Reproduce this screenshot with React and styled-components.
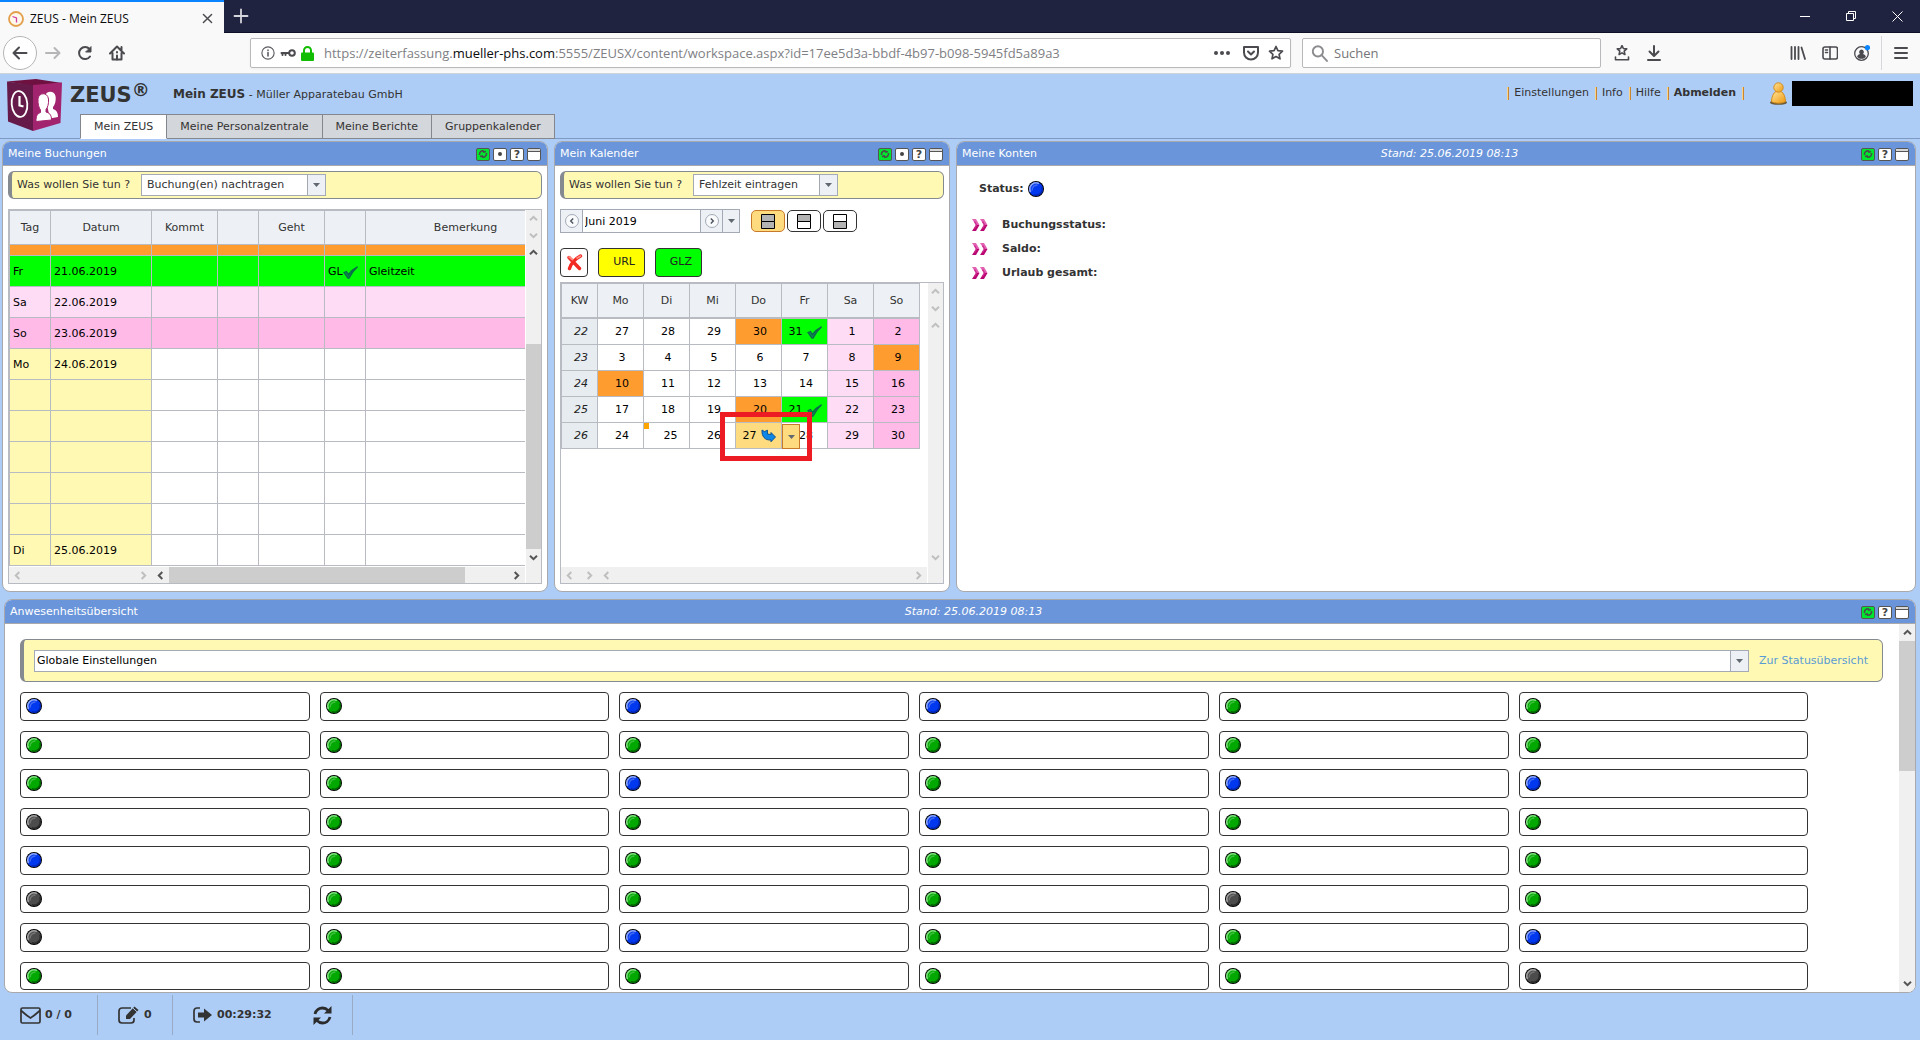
import React from "react";
import styled, { createGlobalStyle, css } from "styled-components";

const ui = `"DejaVu Sans", Verdana, sans-serif`;
const chrome = `"Open Sans", "Segoe UI", sans-serif`;
const c = {
  page: "#adcdf7",
  head: "#6a95da",
  line: "#b8bcc2",
  frame: "#a9a9ab",
  yellow: "#fff9b4",
  field: "#a3aab5",
  text: "#333",
  cell: "#edf1f5",
  orange: "#ff9c30",
  green: "#00ff00",
  sat: "#ffdcf5",
  sun: "#ffbae8",
};

const Global = createGlobalStyle`
  *, *::before, *::after { box-sizing: border-box; }
  html, body, #root { height: 100%; }
  body { margin: 0; background: ${c.page}; color: ${c.text}; font: 11px/14px ${ui}; overflow: hidden; }
  button, input, select { font: inherit; color: inherit; margin: 0; padding: 0; border-radius: 0; }
  a { color: inherit; text-decoration: none; }
  h1, h2, p, ul { margin: 0; padding: 0; font: inherit; list-style: none; }
  svg { display: block; flex: none; }
`;

const Page = styled.div`
  height: 100%;
  display: flex;
  flex-direction: column;
`;

/* ---------- browser frame ---------- */

const TitleBar = styled.div`
  display: flex;
  height: 33px;
  background: #20233f;
  border-bottom: 1px solid #0f1025;
  color: #fff;
  font: 12px/16px ${chrome};
`;
const BrowserTab = styled.div`
  display: flex;
  align-items: center;
  gap: 6px;
  width: 224px;
  height: 33px;
  padding: 2px 10px 0 8px;
  border-top: 2px solid #0a84ff;
  background: #f9f9fa;
  color: #0c0c0d;
  > span { flex: 1; white-space: nowrap; }
`;
const PlainButton = styled.button`
  display: flex;
  align-items: center;
  justify-content: center;
  width: ${(p) => p.$w || 32}px;
  height: ${(p) => p.$h || 32}px;
  border: 0;
  background: none;
  flex: none;
`;
const Spring = styled.div`
  flex: 1;
`;
const NavBar = styled.div`
  display: flex;
  align-items: center;
  height: 41px;
  background: #f9f9fa;
  border-bottom: 1px solid #cfd3da;
  color: #4a4a4f;
  font: 13px/18px ${chrome};
`;
const NavButtons = styled.div`
  display: flex;
  align-items: center;
  width: 250px;
  padding-left: 3px;
`;
const BackButton = styled(PlainButton)`
  border: 1px solid #b5b5b8;
  border-radius: 50%;
  background: #fff;
`;
const UrlBox = styled.div`
  display: flex;
  align-items: center;
  flex: 1;
  height: 30px;
  padding: 0 5px 0 10px;
  gap: 5px;
  border: 1px solid #b9b9bc;
  border-radius: 2px;
  background: #fff;
  box-shadow: 0 1px 3px rgba(0, 0, 0, 0.05);
`;
const UrlText = styled.p`
  flex: 1;
  padding-left: 5px;
  color: #808084;
  white-space: nowrap;
  overflow: hidden;
  b { color: #0c0c0d; font-weight: 400; }
`;
const SearchBox = styled.label`
  display: flex;
  align-items: center;
  width: 299px;
  height: 30px;
  margin-left: 11px;
  padding-left: 8px;
  gap: 6px;
  border: 1px solid #b9b9bc;
  border-radius: 2px;
  background: #fff;
  input { border: 0; width: 100%; outline: 0; background: none; }
  input::placeholder { color: #757578; opacity: 1; }
`;
const NavTools = styled.div`
  display: flex;
  align-items: center;
  width: 319px;
  padding: 0 3px 0 5px;
`;
const Rule = styled.i`
  width: 1px;
  height: 34px;
  background: #d7d7db;
  margin: 0 3px;
`;

/* ---------- application header ---------- */

const AppHead = styled.header`
  display: flex;
  height: 65px;
  border-bottom: 1px solid #8098c4;
`;
const LogoSlot = styled.div`
  width: 70px;
  padding: 5px 0 0 7px;
`;
const HeadMain = styled.div`
  display: flex;
  flex-direction: column;
  justify-content: space-between;
  flex: 1;
`;
const TitleRow = styled.div`
  display: flex;
  align-items: center;
  height: 40px;
  b { font-size: 12px; }
`;
const Brand = styled.h1`
  display: flex;
  width: 103px;
  font-size: 21px;
  line-height: 28px;
  font-weight: 700;
  padding-top: 2px;
  sup { font-size: 18px; line-height: 18px; }
`;
const Tabs = styled.nav`
  display: flex;
  margin: 0 0 -1px 10px;
`;
const Tab = styled.a`
  height: 25px;
  padding: 5px 13px 0;
  border: 1px solid #83878d;
  border-left-width: ${(p) => (p.$active ? 1 : 0)}px;
  background: ${(p) => (p.$active ? "#fff" : "#d3d6da")};
  border-bottom-color: ${(p) => (p.$active ? "#fff" : "#83878d")};
`;
const Menu = styled.nav`
  display: flex;
  align-items: center;
  height: 36px;
  padding-right: 7px;
  margin-top: 1px;
  a { padding: 0 6px 1px 5px; }
`;
const MenuSep = styled.i`
  width: 2px;
  height: 13px;
  border-left: 1px solid #f7d38a;
  border-right: 1px solid #c98532;
`;
const UserBar = styled.div`
  display: flex;
  align-items: center;
  gap: 5px;
  margin-left: 26px;
`;
const Redacted = styled.div`
  width: 121px;
  height: 25px;
  background: #000;
`;

/* ---------- panels ---------- */

const Main = styled.main`
  flex: 1;
  min-height: 0;
  display: flex;
  flex-direction: column;
  gap: 7px;
  padding: 2px 4px 0 2px;
`;
const TopRow = styled.div`
  display: grid;
  grid-template-columns: 546px 396px minmax(0, 1fr);
  gap: 6px;
`;
const PanelBox = styled.section`
  display: flex;
  flex-direction: column;
  min-width: 0;
  min-height: 0;
  border: 1px solid ${c.frame};
  border-radius: 8px;
  background: #fff;
  overflow: hidden;
  flex: ${(p) => (p.$grow ? 1 : "none")};
  margin-left: ${(p) => (p.$grow ? 2 : 0)}px;
`;
const PanelHead = styled.header`
  display: grid;
  grid-template-columns: 1fr auto 1fr;
  align-items: center;
  height: 24px;
  padding: 1px 6px 0 5px;
  border-bottom: 1px solid ${c.frame};
  background: ${c.head};
  color: #fff;
  em { padding-left: 28px; }
`;
const PanelTools = styled.div`
  grid-column: 3;
  display: flex;
  justify-content: flex-end;
  gap: 3px;
`;
const ToolButton = styled.button`
  display: flex;
  align-items: center;
  justify-content: center;
  width: 14px;
  height: 13px;
  border: 1px solid #555;
  border-radius: 2px;
  background: ${(p) => (p.$on ? "#00e62e" : "#fff")};
  color: #444;
  font-weight: 700;
  line-height: 11px;
`;
const Pad = styled.div`
  flex: 1;
  display: flex;
  flex-direction: column;
  padding: 5px 5px 7px;
`;
const YellowBar = styled.div`
  display: flex;
  align-items: center;
  height: ${(p) => (p.$tall ? 43 : 28)}px;
  padding: ${(p) => (p.$tall ? "0 10px" : "0 5px")};
  gap: ${(p) => (p.$tall ? 10 : 7)}px;
  border: 1px solid #858a90;
  border-left-width: 4px;
  border-radius: 6px;
  background: ${c.yellow};
  label { min-width: 117px; }
  a { min-width: 113px; color: #5a9bd5; }
`;
const Combo = styled.div`
  display: grid;
  grid-template-columns: 1fr 18px;
  width: ${(p) => p.$w || "auto"};
  flex: ${(p) => (p.$w ? "none" : 1)};
  height: 22px;
  border: 1px solid ${c.field};
  background: #fff;
  select {
    grid-area: 1 / 1 / 2 / 3;
    appearance: none;
    border: 0;
    background: none;
    padding-left: ${(p) => (p.$w ? 5 : 2)}px;
    color: ${(p) => (p.$w ? c.text : "#000")};
    outline: 0;
  }
`;
const Drop = styled.span`
  grid-area: 1 / 2;
  display: flex;
  align-items: center;
  justify-content: center;
  border-left: 1px solid ${c.field};
  background: ${c.cell};
  pointer-events: none;
`;

/* ---------- scroll frame ---------- */

const Frame = styled.div`
  flex: 1;
  display: grid;
  grid-template-columns: minmax(0, 1fr) 16px;
  grid-template-rows: 1fr 17px;
  border: 1px solid ${c.line};
  margin-top: ${(p) => p.$gap}px;
`;
const View = styled.div`
  overflow: hidden;
  background: #fff;
`;
const VScroll = styled.div`
  display: flex;
  flex-direction: column;
  background: #f0f0f0;
  border-left: 1px solid #fff;
`;
const HScroll = styled.div`
  display: flex;
  border-top: 1px solid #fff;
  background: #f0f0f0;
`;
const Corner = styled.div`
  background: #f0f0f0;
  border-left: 1px solid #fff;
`;
const Bit = styled.div`
  display: flex;
  width: ${(p) => p.$w || "auto"};
  flex: ${(p) => (p.$w ? "none" : 1)};
  justify-content: space-between;
`;
const ArrowSlot = styled.span`
  display: flex;
  align-items: center;
  justify-content: center;
  flex: 0 0 17px;
`;
const Gap = styled.span`
  flex: ${(p) => p.$n} 0 0;
  background: ${(p) => (p.$thumb ? "#cdcdcd" : "none")};
`;

const rot = { up: 0, right: 90, down: 180, left: 270 };
const Arrow = ({ dir, dim }) => (
  <ArrowSlot>
    <svg width="9" height="9" viewBox="0 0 9 9">
      <path d="M1 6.3 4.5 2.8 8 6.3" fill="none" stroke={dim ? "#bfbfbf" : "#555"} strokeWidth="2" transform={`rotate(${rot[dir]} 4.5 4.5)`} />
    </svg>
  </ArrowSlot>
);

/* ---------- bookings ---------- */

const grid = css`
  table-layout: fixed;
  border-collapse: separate;
  border-spacing: 0;
  border: 0 solid ${c.line};
  border-width: 1px 0 0 1px;
  th, td {
    padding: 1px 0 0;
    border: 0 solid ${c.line};
    border-width: 0 1px 1px 0;
    font-weight: 400;
    line-height: 14px;
    white-space: nowrap;
  }
`;
const BookTable = styled.table`
  ${grid}
  width: 557px;
  th { height: 34px; background: ${c.cell}; }
  td { color: #000; padding: 2px 0 0 3px; }
`;
const BookRow = styled.tr`
  height: ${(p) => (p.$cut ? 11 : 31)}px;
  background: ${(p) => p.$bg || "#fff"};
  td:nth-child(-n + 2) { background: ${(p) => p.$bg || c.yellow}; }
`;
const WithIcon = styled.span`
  display: flex;
  align-items: center;
  justify-content: ${(p) => (p.$center ? "center" : "flex-start")};
  gap: ${(p) => (p.$center ? 4 : 0)}px;
`;

/* ---------- calendar ---------- */

const Controls = styled.div`
  display: flex;
  gap: ${(p) => p.$gap}px;
  margin-top: ${(p) => p.$top}px;
`;
const Spinner = styled.div`
  display: grid;
  grid-template-columns: 22px 1fr 22px 17px;
  width: 180px;
  height: 24px;
  margin-right: 9px;
  border: 1px solid ${c.field};
  input { border: 0; min-width: 0; padding: 2px 0 0 2px; color: #000; outline: 0; background: #fff; }
`;
const SpinButton = styled.button`
  display: flex;
  align-items: center;
  justify-content: center;
  border: 0 solid ${c.field};
  border-width: ${(p) => (p.$first ? "0 1px 0 0" : "0 0 0 1px")};
  background: ${c.cell};
`;
const Toggle = styled.button`
  display: flex;
  align-items: center;
  justify-content: center;
  width: 34px;
  height: 22px;
  margin-top: 1px;
  border: 1px solid ${(p) => (p.$on ? "#c9792a" : "#333")};
  border-radius: 5px;
  background: ${(p) => (p.$on ? "#ffdb7f" : "#fff")};
`;
const TypeButton = styled.button`
  display: flex;
  align-items: center;
  justify-content: ${(p) => (p.$bg ? "flex-end" : "center")};
  width: ${(p) => (p.$bg ? 47 : 28)}px;
  height: 29px;
  padding: ${(p) => (p.$bg ? "0 9px 2px 0" : 0)};
  border: 1px solid #333;
  border-radius: 4px;
  background: ${(p) => p.$bg || "#fff"};
  color: #222;
`;
const CalTable = styled.table`
  ${grid}
  width: 359px;
  thead th { height: 35px; border-bottom-width: 2px; background: ${c.cell}; }
  th:first-child { width: 36px; }
  tbody tr { height: 26px; }
  tbody th { background: #e6ecf0; color: #222; font-style: italic; padding-left: 3px; }
`;
const Day = styled.td`
  position: relative;
  color: #000;
  text-align: center;
  background: ${(p) => p.$bg || "#fff"};
  && { padding-left: ${(p) => (p.$icon ? 1 : p.$mark ? 8 : 3)}px; }
`;
const Marker = styled.i`
  position: absolute;
  left: 0;
  top: 0;
  width: 5px;
  height: 6px;
  background: #ffa500;
`;
const CellDrop = styled.button`
  position: absolute;
  z-index: 2;
  left: 46px;
  top: 1px;
  display: flex;
  align-items: center;
  justify-content: center;
  width: 18px;
  height: 25px;
  border: 1px solid #c9792a;
  background: #ffdb7f;
`;
const Highlight = styled.div`
  position: absolute;
  z-index: 3;
  left: -16px;
  top: -11px;
  width: 92px;
  height: 49px;
  border: 5px solid #ed1c24;
  pointer-events: none;
`;

/* ---------- accounts ---------- */

const Accounts = styled.div`
  padding: 15px;
  font-weight: 700;
`;
const StatusLine = styled.p`
  display: flex;
  align-items: center;
  gap: 4px;
  height: 16px;
  padding-left: 7px;
  margin-bottom: 16px;
`;
const AccountItem = styled.li`
  display: flex;
  align-items: center;
  gap: 14px;
  height: 24px;
`;

/* ---------- presence ---------- */

const PresenceBody = styled.div`
  flex: 1;
  min-height: 0;
  display: flex;
`;
const PresenceMain = styled.div`
  flex: 1;
  min-width: 0;
  display: flex;
  flex-direction: column;
  gap: 10px;
  padding: 15px 16px 2px 15px;
`;
const Cards = styled.ul`
  flex: 1;
  display: grid;
  grid-template-columns: repeat(6, 1fr);
  grid-auto-rows: 1fr;
  gap: 10px;
  width: 96%;
`;
const Card = styled.li`
  padding: 5px;
  border: 1px solid #333;
  border-radius: 4px;
`;
const SideScroll = styled(VScroll)`
  width: 16px;
  border-left: 0;
`;

/* ---------- footer ---------- */

const Foot = styled.footer`
  display: flex;
  padding: 2px 0 5px;
  height: 47px;
  font-weight: 700;
`;
const FootPart = styled.div`
  display: flex;
  align-items: center;
  gap: 4px;
  min-width: ${(p) => p.$w}px;
  padding: 0 20px;
  border-right: 1px solid #98aac4;
  button { margin: 0 0 0 auto; }
`;

/* ---------- icons ---------- */

const Down = () => (
  <svg width="7" height="4" viewBox="0 0 7 4"><path d="M0 0h7L3.5 4z" fill="#616870" /></svg>
);
const Line = ({ s = 16, w = 2, color = "#4a4a4f", children }) => (
  <svg width={s} height={s} viewBox="0 0 16 16" fill="none" stroke={color} strokeWidth={w} strokeLinecap="round" strokeLinejoin="round">{children}</svg>
);
const star = "M8 1.5l1.9 4.2 4.6.5-3.4 3.1.9 4.5L8 11.500 4 13.800l.9-4.500L1.500 6.200l4.600-.5z";
const Favicon = () => (
  <svg width="16" height="16" viewBox="0 0 16 16">
    <circle cx="8" cy="8" r="7" fill="#fff8ec" stroke="#e2a04d" strokeWidth="1.800" />
    <path d="M4.500 5.500 8.500 7v4.500" fill="none" stroke="#cf3fa2" strokeWidth="1.300" />
  </svg>
);
const Logo = () => (
  <svg width="55" height="52" viewBox="0 0 55 52">
    <path d="M0 2.500 29 0l26 4-29 3z" fill="#6e1140" />
    <path d="M0 2.500 26 6v46L1 42.500z" fill="#651a49" />
    <path d="M26 6 55 3.500 53.500 44 26 52z" fill="#a3246e" />
    <ellipse cx="12.500" cy="25" rx="7.800" ry="13" fill="none" stroke="#fff" strokeWidth="1.800" transform="rotate(-5 12.500 25)" />
    <path d="M12.500 17v9.500l4 1" fill="none" stroke="#fff" strokeWidth="2.200" />
    <path d="M38 17c1-5 9-6 10.500 0 .8 5-.8 9-2.500 11v2c2 1 5 1.500 5 8l-8 1.500z" fill="#fff" />
    <path d="M31 20c.5-6.500 9.500-7.500 10.500 0 .5 5-1 8.500-2.500 10.500v2.500c3 1 5.500 2 5.500 8L29 42.500c0-5.500 1-7.500 4.500-9v-2.500c-1.500-2-2.800-6-2.500-11z" fill="#fff" stroke="#a3246e" />
  </svg>
);
const User = () => (
  <svg width="17" height="23" viewBox="0 0 17 23">
    <defs>
      <linearGradient id="user" x2="1" y2="1"><stop stopColor="#ffe49a" /><stop offset="1" stopColor="#ee9a12" /></linearGradient>
    </defs>
    <ellipse cx="8.500" cy="20.500" rx="8.500" ry="2.300" fill="#6b5838" />
    <path d="M6 9.500C3 11 1.700 15 1.500 19.500c3 2.200 11 2.200 14 0C15.300 15 14 11 11 9.500z" fill="url(#user)" stroke="#d48d1c" />
    <circle cx="8.500" cy="5.500" r="4.700" fill="url(#user)" stroke="#d48d1c" />
  </svg>
);
const Check = () => (
  <svg width="15" height="13" viewBox="0 0 15 13"><path d="M1 6.500 3.500 5.500 5.500 8.500C8 5 11 2.500 14.500.8 11 4 8 8 6 12.200H5z" fill="#0d8a50" stroke="#0a6a4a" strokeWidth="1.300" /></svg>
);
const BlueArrow = () => (
  <svg width="15" height="14" viewBox="0 0 15 14"><path d="M1 1 3.500 2.500 6.500 1.200V5L10 5.500V3.500L14.500 8 10 12.800V11C4 11.500.5 7.500 1 1z" fill="#0d86e6" stroke="#074a8c" strokeWidth=".9" /></svg>
);
const RedX = () => (
  <svg width="17" height="17" viewBox="0 0 17 17">
    <path d="M3 3.500 13.500 14.500M14.500 2C9 5 5 9.500 3.500 14.500" stroke="#f32a22" strokeWidth="3.400" fill="none" strokeLinecap="round" />
    <path d="M2.500 2.500 7 6M15 1.700 10.500 4.500" stroke="#ff8c80" strokeWidth="1.600" fill="none" />
  </svg>
);
const Chevrons = () => (
  <svg width="16" height="12" viewBox="0 0 16 12">
    {[0, 8].map((x) => (
      <g key={x} transform={`translate(${x} 0)`}>
        <path d="M0 0h4l3.500 6H4z" fill="#e263b4" />
        <path d="M0 12h4l3.500-6H4z" fill="#b9056f" />
        <path d="M2.500 2.500 4.500 6l-2 3.500" stroke="#cf2b8f" fill="none" strokeWidth="1.500" />
      </g>
    ))}
  </svg>
);
const balls = {
  B: ["#0038f0", "#8da6f5", "#0025b0"],
  G: ["#00a800", "#7fdc7f", "#006200"],
  K: ["#4c4c4c", "#a0a0a0", "#2a2a2a"],
};
const Ball = ({ kind }) => {
  const [base, light, dark] = balls[kind];
  return (
    <svg width="16" height="16" viewBox="0 0 16 16" fill="none">
      <circle cx="8" cy="8" r="8" fill="#000" />
      <circle cx="8" cy="8" r="7" fill={base} />
      <path d="M2.600 11A6.200 6.200 0 0 1 11 2.600" stroke={light} strokeWidth="1.600" />
      <path d="M4.200 9.500A4.600 4.600 0 0 1 9.500 4.200" stroke={light} strokeWidth="1.600" opacity=".45" />
      <path d="M13.800 5.800A6.200 6.200 0 0 1 5.800 13.800" stroke={dark} strokeWidth="1.500" />
    </svg>
  );
};
const Half = ({ top, bottom }) => (
  <svg width="14" height="15" viewBox="0 0 14 15" stroke="#000">
    <path d="M.5.500h13v7H.5z" fill={top ? "#b3b3b3" : "#fff"} />
    <path d="M.5 7.500h13v7H.5z" fill={bottom ? "#b3b3b3" : "#fff"} />
  </svg>
);
const Round = ({ left }) => (
  <svg width="14" height="14" viewBox="0 0 14 14" fill="none">
    <circle cx="7" cy="7" r="6.500" fill="#f8fafc" stroke="#a3aab5" />
    <path d={left ? "M8.200 4.500 5.700 7l2.500 2.500" : "M5.800 4.500 8.300 7l-2.500 2.500"} stroke="#4c535c" strokeWidth="1.400" />
  </svg>
);
const Cycle = () => (
  <svg width="19" height="19" viewBox="0 0 19 19" fill="none" stroke="#2b2b2b" strokeWidth="2.800">
    <path d="M2 8C3 4 6.500 2 9.500 2c2.500 0 4.300 1 5.800 2.600M17 11c-1 4-4.500 6-7.500 6-2.500 0-4.300-1-5.800-2.600" />
    <path d="M18.500 0v7.500H11zM.5 19v-7.500H8z" fill="#2b2b2b" stroke="none" />
  </svg>
);

const Tools = ({ dot }) => (
  <PanelTools>
    <ToolButton $on aria-label="Aktualisieren">
      <svg width="10" height="10" viewBox="0 0 10 10" fill="none" stroke="#4a4a4a" strokeWidth="1.500">
        <path d="M1.500 6C1 3 3.500 1.300 6 2M8.500 4C9 7 6.500 8.700 4 8M2 7.500l3-.8M8 2.500l-3 .8" />
      </svg>
    </ToolButton>
    {dot && (
      <ToolButton aria-label="Optionen">
        <svg width="4" height="4" viewBox="0 0 4 4"><circle cx="2" cy="2" r="2" fill="#444" /></svg>
      </ToolButton>
    )}
    <ToolButton aria-label="Hilfe">?</ToolButton>
    <ToolButton aria-label="Maximieren">
      <svg width="12" height="11" viewBox="0 0 12 11"><path d="M0 0h12v2H0z" fill="#d8d8d8" /><path d="M0 2h12v1H0z" fill="#555" /></svg>
    </ToolButton>
  </PanelTools>
);
const Panel = ({ title, stand, dot, grow, children }) => (
  <PanelBox $grow={grow}>
    <PanelHead>
      <h2>{title}</h2>
      {stand && <em>{stand}</em>}
      <Tools dot={dot} />
    </PanelHead>
    {children}
  </PanelBox>
);
const Select = ({ id, label, value, w }) => (
  <Combo $w={w}>
    <select id={id} aria-label={label} defaultValue={value}><option>{value}</option></select>
    <Drop><Down /></Drop>
  </Combo>
);

/* ---------- data ---------- */

const bookings = [
  { cut: true, bg: c.orange },
  { tag: "Fr", datum: "21.06.2019", code: "GL", note: "Gleitzeit", bg: c.green },
  { tag: "Sa", datum: "22.06.2019", bg: c.sat },
  { tag: "So", datum: "23.06.2019", bg: c.sun },
  { tag: "Mo", datum: "24.06.2019" },
  {}, {}, {}, {}, {},
  { tag: "Di", datum: "25.06.2019" },
];
const bookCols = [41, 101, 66, 41, 66, 41, 200];
const weeks = [
  [22, 27, 28, 29, 30, 31, 1, 2],
  [23, 3, 4, 5, 6, 7, 8, 9],
  [24, 10, 11, 12, 13, 14, 15, 16],
  [25, 17, 18, 19, 20, 21, 22, 23],
  [26, 24, 25, 26, 27, 28, 29, 30],
];
const holidays = ["22-3", "23-6", "24-0", "25-3"];
const approved = ["22-4", "25-4"];
const presence = ["BGBBGG", "GGGGGG", "GGBGBB", "KGGBGG", "BGGGGG", "KGGGKG", "KGBGGB", "GGGGGK"];

const DayCell = ({ week, i, n }) => {
  const key = `${week}-${i}`;
  if (key === "26-3")
    return (
      <Day $bg="#ffdb7f" $icon>
        <WithIcon $center>{n}<BlueArrow /></WithIcon>
        <CellDrop aria-label="Auswahl"><Down /></CellDrop>
        <Highlight />
      </Day>
    );
  if (approved.includes(key))
    return <Day $bg={c.green} $icon><WithIcon $center>{n}<Check /></WithIcon></Day>;
  const mark = key === "26-1";
  const bg = holidays.includes(key) ? c.orange : i === 5 ? c.sat : i === 6 ? c.sun : undefined;
  return <Day $bg={bg} $mark={mark}>{mark && <Marker />}{n}</Day>;
};

const Browser = () => (
  <>
    <TitleBar>
      <BrowserTab>
        <Favicon />
        <span>ZEUS - Mein ZEUS</span>
        <PlainButton $w={14} $h={20} aria-label="Tab schließen"><Line s={13} w={1.800}><path d="M3 3l10 10M13 3 3 13" /></Line></PlainButton>
      </BrowserTab>
      <PlainButton $w={34} aria-label="Neuer Tab"><Line s={16} color="#d5d5dc" w={1.800}><path d="M8 1.500v13M1.500 8h13" /></Line></PlainButton>
      <Spring />
      <PlainButton $w={46} aria-label="Minimieren"><svg width="10" height="10"><path d="M0 5.500h10" stroke="#fff" /></svg></PlainButton>
      <PlainButton $w={46} aria-label="Verkleinern"><svg width="10" height="10" fill="none" stroke="#fff"><path d="M.5 2.500h7v7h-7zM2.500 2.500v-2h7v7h-2" /></svg></PlainButton>
      <PlainButton $w={46} aria-label="Schließen"><svg width="11" height="11" stroke="#fff"><path d="M.5.500l10 10M10.500.500l-10 10" /></svg></PlainButton>
    </TitleBar>
    <NavBar>
      <NavButtons>
        <BackButton $w={34} $h={34} aria-label="Zurück"><Line><path d="M14.500 8H1.500M7 2.500 1.500 8 7 13.500" /></Line></BackButton>
        <PlainButton aria-label="Vor"><Line color="#b6b6b9"><path d="M1 8h13M9.500 3 14.500 8l-5 5" /></Line></PlainButton>
        <PlainButton aria-label="Neu laden"><Line><path d="M13 11.500A6 6 0 1 1 12.500 4" /><path d="M14 2v5H9z" fill="#4a4a4f" strokeWidth="1" /></Line></PlainButton>
        <PlainButton aria-label="Startseite"><Line><path d="M1 8.500 8 1.500l7 7M3.500 8v6.500h9V8M12.500 2v3" /><path d="M8 14.500v-4M8 7v.5" /></Line></PlainButton>
      </NavButtons>
      <UrlBox>
        <Line s={14} w={1.300} color="#5c5c61"><circle cx="8" cy="8" r="7" /><path d="M8 7.500v4M8 4.500v.5" strokeWidth="1.800" /></Line>
        <Line s={16}><circle cx="12" cy="8" r="2.800" /><path d="M9 8H1.500M2.500 8v2M5.500 8v2" /></Line>
        <svg width="13" height="15" viewBox="0 0 13 15"><path d="M3 7V4.500a3.500 3.500 0 0 1 7 0V7" fill="none" stroke="#12bc00" strokeWidth="2" /><rect y="6.500" width="13" height="8.500" rx="1" fill="#12bc00" /></svg>
        <UrlText>https://zeiterfassung.<b>mueller-phs.com</b>:5555/ZEUSX/content/workspace.aspx?id=17ee5d3a-bbdf-4b97-b098-5945fd5a89a3</UrlText>
        <PlainButton $w={24} aria-label="Seitenaktionen"><svg width="16" height="4" fill="#4a4a4f"><circle cx="2" cy="2" r="2" /><circle cx="8" cy="2" r="2" /><circle cx="14" cy="2" r="2" /></svg></PlainButton>
        <PlainButton $w={23} aria-label="Pocket"><Line><path d="M1 2h14v5.500a7 7 0 0 1-14 0zM5 6.500 8 9.500l3-3" /></Line></PlainButton>
        <PlainButton $w={18} aria-label="Lesezeichen"><Line w={1.700}><path d={star} /></Line></PlainButton>
      </UrlBox>
      <SearchBox>
        <Line s={17} w={1.800} color="#8c8c90"><circle cx="6.500" cy="6" r="4.800" /><path d="M10 9.500l5 5.500" /></Line>
        <input placeholder="Suchen" aria-label="Suchen" />
      </SearchBox>
      <NavTools>
        <PlainButton aria-label="Lesezeichen anzeigen"><Line w={1.600}><path d="M8 .5l1.400 3 3.300.4-2.500 2.300.7 3.300L8 7.900 5.100 9.500l.7-3.300L3.300 3.900l3.300-.4zM1.500 12v2.800h13V12" /></Line></PlainButton>
        <PlainButton aria-label="Downloads"><Line><path d="M8 1v9.500M3.500 6.500 8 11l4.500-4.500M2 15h12" /></Line></PlainButton>
        <Spring />
        <PlainButton aria-label="Bibliothek"><Line w={1.800}><path d="M1.500 2v12M5 2v12M8.500 2v12M11.500 2.500 15 14" /></Line></PlainButton>
        <PlainButton aria-label="Seitenleiste"><Line w={1.600}><rect x="1" y="2" width="14.500" height="12" rx="2" /><path d="M8 2v12M3.500 5h2M3.500 7.500h2" /></Line></PlainButton>
        <PlainButton aria-label="Konto"><Line w={1.300}><circle cx="7.500" cy="8.500" r="6.800" /><path d="M7.500 4.500a2.500 2.500 0 0 1 1.500 4.400c2 .6 2.800 1.400 2.800 3-2.300 2.600-6.300 2.600-8.600 0 0-1.600.8-2.400 2.800-3A2.500 2.500 0 0 1 7.500 4.500z" fill="#4a4a4f" stroke="none" /><circle cx="13.500" cy="2.700" r="2.600" fill="#0a84ff" stroke="none" /></Line></PlainButton>
        <Rule />
        <PlainButton aria-label="Menü"><Line><path d="M2 3h12M2 8h12M2 13h12" /></Line></PlainButton>
      </NavTools>
    </NavBar>
  </>
);

const Bookings = () => (
  <Panel title="Meine Buchungen" dot>
    <Pad>
      <YellowBar>
        <label htmlFor="booking">Was wollen Sie tun ?</label>
        <Select id="booking" value="Buchung(en) nachtragen" w="185px" />
      </YellowBar>
      <Frame $gap={10}>
        <View>
          <BookTable>
            <colgroup>{bookCols.map((w, i) => <col key={i} width={w} />)}</colgroup>
            <thead><tr>{["Tag", "Datum", "Kommt", "", "Geht", "", "Bemerkung"].map((t, i) => <th key={i}>{t}</th>)}</tr></thead>
            <tbody>
              {bookings.map((b, i) => (
                <BookRow key={i} $cut={b.cut} $bg={b.bg}>
                  <td>{b.tag}</td><td>{b.datum}</td><td /><td /><td />
                  <td>{b.code && <WithIcon>{b.code}<Check /></WithIcon>}</td>
                  <td>{b.note}</td>
                </BookRow>
              ))}
            </tbody>
          </BookTable>
        </View>
        <VScroll>
          <Arrow dir="up" dim /><Arrow dir="down" dim /><Arrow dir="up" />
          <Gap $n={82} /><Gap $n={204} $thumb />
          <Arrow dir="down" />
        </VScroll>
        <HScroll>
          <Bit $w="143px"><Arrow dir="left" dim /><Arrow dir="right" dim /></Bit>
          <Bit><Arrow dir="left" /><Gap $n={297} $thumb /><Gap $n={43} /><Arrow dir="right" /></Bit>
        </HScroll>
        <Corner />
      </Frame>
    </Pad>
  </Panel>
);

const Calendar = () => (
  <Panel title="Mein Kalender" dot>
    <Pad>
      <YellowBar>
        <label htmlFor="absence">Was wollen Sie tun ?</label>
        <Select id="absence" value="Fehlzeit eintragen" w="145px" />
      </YellowBar>
      <Controls $gap={2} $top={10}>
        <Spinner>
          <SpinButton $first aria-label="Vorheriger Monat"><Round left /></SpinButton>
          <input aria-label="Monat" defaultValue="Juni 2019" />
          <SpinButton aria-label="Nächster Monat"><Round /></SpinButton>
          <SpinButton aria-label="Monat wählen"><Down /></SpinButton>
        </Spinner>
        <Toggle $on aria-label="Ganzer Tag"><Half top bottom /></Toggle>
        <Toggle aria-label="Erste Tageshälfte"><Half top /></Toggle>
        <Toggle aria-label="Zweite Tageshälfte"><Half bottom /></Toggle>
      </Controls>
      <Controls $gap={10} $top={15}>
        <TypeButton aria-label="Löschen"><RedX /></TypeButton>
        <TypeButton $bg="#ffff00">URL</TypeButton>
        <TypeButton $bg={c.green}>GLZ</TypeButton>
      </Controls>
      <Frame $gap={5}>
        <View>
          <CalTable>
            <thead><tr>{["KW", "Mo", "Di", "Mi", "Do", "Fr", "Sa", "So"].map((d) => <th key={d} scope="col">{d}</th>)}</tr></thead>
            <tbody>
              {weeks.map(([week, ...days]) => (
                <tr key={week}>
                  <th scope="row">{week}</th>
                  {days.map((n, i) => <DayCell key={i} week={week} i={i} n={n} />)}
                </tr>
              ))}
            </tbody>
          </CalTable>
        </View>
        <VScroll>
          <Arrow dir="up" dim /><Arrow dir="down" dim /><Arrow dir="up" dim />
          <Gap $n={1} />
          <Arrow dir="down" dim />
        </VScroll>
        <HScroll>
          <Bit $w="37px"><Arrow dir="left" dim /><Arrow dir="right" dim /></Bit>
          <Bit><Arrow dir="left" dim /><Arrow dir="right" dim /></Bit>
        </HScroll>
        <Corner />
      </Frame>
    </Pad>
  </Panel>
);

export default function App() {
  return (
    <Page>
      <Global />
      <Browser />
      <AppHead>
        <LogoSlot><Logo /></LogoSlot>
        <HeadMain>
          <TitleRow>
            <Brand>ZEUS<sup>®</sup></Brand>
            <p><b>Mein ZEUS</b> - Müller Apparatebau GmbH</p>
          </TitleRow>
          <Tabs>
            <Tab href="#zeus" $active>Mein ZEUS</Tab>
            <Tab href="#personal">Meine Personalzentrale</Tab>
            <Tab href="#berichte">Meine Berichte</Tab>
            <Tab href="#gruppe">Gruppenkalender</Tab>
          </Tabs>
        </HeadMain>
        <Menu>
          <MenuSep /><a href="#settings">Einstellungen</a>
          <MenuSep /><a href="#info">Info</a>
          <MenuSep /><a href="#help">Hilfe</a>
          <MenuSep /><a href="#logout"><b>Abmelden</b></a>
          <MenuSep />
          <UserBar><User /><Redacted /></UserBar>
        </Menu>
      </AppHead>
      <Main>
        <TopRow>
          <Bookings />
          <Calendar />
          <Panel title="Meine Konten" stand="Stand: 25.06.2019 08:13">
            <Accounts>
              <StatusLine>Status:<Ball kind="B" /></StatusLine>
              <ul>
                {["Buchungsstatus:", "Saldo:", "Urlaub gesamt:"].map((t) => (
                  <AccountItem key={t}><Chevrons />{t}</AccountItem>
                ))}
              </ul>
            </Accounts>
          </Panel>
        </TopRow>
        <Panel title="Anwesenheitsübersicht" stand="Stand: 25.06.2019 08:13" grow>
          <PresenceBody>
            <PresenceMain>
              <YellowBar $tall>
                <Select label="Einstellung" value="Globale Einstellungen" />
                <a href="#status">Zur Statusübersicht</a>
              </YellowBar>
              <Cards>
                {presence.flatMap((row, r) => [...row].map((k, i) => <Card key={`${r}-${i}`}><Ball kind={k} /></Card>))}
              </Cards>
            </PresenceMain>
            <SideScroll>
              <Arrow dir="up" /><Gap $n={130} $thumb /><Gap $n={204} /><Arrow dir="down" />
            </SideScroll>
          </PresenceBody>
        </Panel>
      </Main>
      <Foot>
        <FootPart $w={98}>
          <svg width="21" height="17" viewBox="0 0 21 17" fill="none" stroke="#333" strokeWidth="1.700"><rect x="1" y="1" width="19" height="15" rx="1.500" /><path d="M1 3.500c3 2.500 6 5.500 9.500 7.500 3.500-2 6.500-5 9.500-7.500" /></svg>
          0 / 0
        </FootPart>
        <FootPart $w={75}>
          <svg width="22" height="18" viewBox="0 0 22 18" fill="none" stroke="#333" strokeWidth="1.700"><path d="M13 2H4a3 3 0 0 0-3 3v9a3 3 0 0 0 3 3h9a3 3 0 0 0 3-3v-2" /><path d="M8 9.500 16.500.500l4 3.500-8.500 9H8z" fill="#333" stroke="none" /><path d="M15 2.200l4 3.600" stroke={c.page} strokeWidth="1" /></svg>
          0
        </FootPart>
        <FootPart $w={180}>
          <svg width="20" height="16" viewBox="0 0 20 16"><path d="M7 1H4a3 3 0 0 0-3 3v8a3 3 0 0 0 3 3h3" fill="none" stroke="#333" strokeWidth="1.700" /><path d="M5 5.500h6V1.500L19 8l-8 6.500v-4H5z" fill="#333" /></svg>
          00:29:32
          <PlainButton $w={20} $h={20} aria-label="Aktualisieren"><Cycle /></PlainButton>
        </FootPart>
      </Foot>
    </Page>
  );
}
